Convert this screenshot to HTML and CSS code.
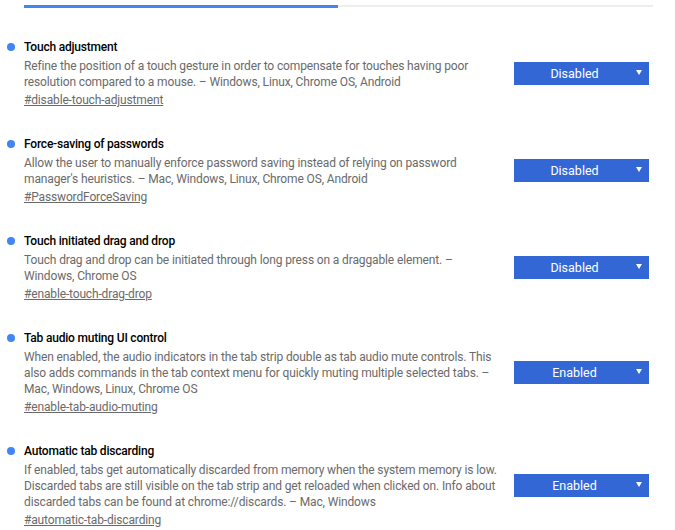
FILE: index.html
```html
<!DOCTYPE html>
<html>
<head>
<meta charset="utf-8">
<link rel="stylesheet" href="styles.css">
</head>
<body>
<div class="page">
  <div class="tabbar"><div class="tab-active"></div><div class="tab-rest"></div></div>
  <div class="list">
    <div class="exp">
      <div class="text">
        <div class="title"><span class="dot"></span>Touch adjustment</div>
        <div class="desc">Refine the position of a touch gesture in order to compensate for touches having poor resolution compared to a mouse. – Windows, Linux, Chrome OS, Android</div>
        <a class="link">#disable-touch-adjustment</a>
      </div>
      <div class="select"><span class="label">Disabled</span><svg class="arrow" width="6" height="5" viewBox="0 0 6 5"><path d="M0 0H6L3 5Z" fill="#fff"/></svg></div>
    </div>
    <div class="exp">
      <div class="text">
        <div class="title"><span class="dot"></span>Force-saving of passwords</div>
        <div class="desc">Allow the user to manually enforce password saving instead of relying on password manager's heuristics. – Mac, Windows, Linux, Chrome OS, Android</div>
        <a class="link">#PasswordForceSaving</a>
      </div>
      <div class="select"><span class="label">Disabled</span><svg class="arrow" width="6" height="5" viewBox="0 0 6 5"><path d="M0 0H6L3 5Z" fill="#fff"/></svg></div>
    </div>
    <div class="exp">
      <div class="text">
        <div class="title"><span class="dot"></span>Touch initiated drag and drop</div>
        <div class="desc">Touch drag and drop can be initiated through long press on a draggable element. – Windows, Chrome OS</div>
        <a class="link">#enable-touch-drag-drop</a>
      </div>
      <div class="select"><span class="label">Disabled</span><svg class="arrow" width="6" height="5" viewBox="0 0 6 5"><path d="M0 0H6L3 5Z" fill="#fff"/></svg></div>
    </div>
    <div class="exp">
      <div class="text">
        <div class="title"><span class="dot"></span>Tab audio muting UI control</div>
        <div class="desc">When enabled, the audio indicators in the tab strip double as tab audio mute controls. This also adds commands in the tab context menu for quickly muting multiple selected tabs. – Mac, Windows, Linux, Chrome OS</div>
        <a class="link">#enable-tab-audio-muting</a>
      </div>
      <div class="select"><span class="label">Enabled</span><svg class="arrow" width="6" height="5" viewBox="0 0 6 5"><path d="M0 0H6L3 5Z" fill="#fff"/></svg></div>
    </div>
    <div class="exp">
      <div class="text">
        <div class="title"><span class="dot"></span>Automatic tab discarding</div>
        <div class="desc">If enabled, tabs get automatically discarded from memory when the system memory is low. Discarded tabs are still visible on the tab strip and get reloaded when clicked on. Info about discarded tabs can be found at chrome://discards. – Mac, Windows</div>
        <a class="link">#automatic-tab-discarding</a>
      </div>
      <div class="select"><span class="label">Enabled</span><svg class="arrow" width="6" height="5" viewBox="0 0 6 5"><path d="M0 0H6L3 5Z" fill="#fff"/></svg></div>
    </div>
  </div>
</div>
</body>
</html>
```
FILE: styles.css
```css
html, body {
  margin: 0;
  padding: 0;
  background: #fff;
}
body {
  font-family: Roboto, "Liberation Sans", sans-serif;
  font-size: 12px;
  line-height: 16px;
  color: #000;
}
.page {
  padding: 5px 22px 0 24px;
}
.tabbar {
  display: flex;
  height: 3px;
  width: 629px;
}
.tab-active {
  width: 314px;
  background: #4285f4;
}
.tab-rest {
  flex: 1;
  background: #eeeeee;
  height: 2px;
}
.list {
  padding-top: 31px;
}
.exp {
  display: flex;
  align-items: center;
  margin-bottom: 28px;
}
.text {
  width: 476px;
  flex: none;
}
.title {
  position: relative;
  font-weight: 500;
  color: #000;
  letter-spacing: -0.2px;
}
.dot {
  position: absolute;
  left: -17px;
  top: 4px;
  width: 8px;
  height: 8px;
  border-radius: 50%;
  background: #4285f4;
}
.desc {
  margin-top: 3px;
  color: #6a6a6a;
  letter-spacing: -0.13px;
}
.link {
  display: inline-block;
  margin-top: 2px;
  color: #6a6a6a;
  text-decoration: underline;
  letter-spacing: -0.15px;
}
.select {
  margin-left: 14px;
  width: 135px;
  height: 23px;
  background: #3367d6;
  color: #fff;
  font-size: 12.5px;
  display: flex;
  align-items: center;
  position: relative;
}
.label {
  flex: 1;
  text-align: center;
  padding-right: 14px;
}
.arrow {
  position: absolute;
  right: 7px;
  top: 8px;
}
```
